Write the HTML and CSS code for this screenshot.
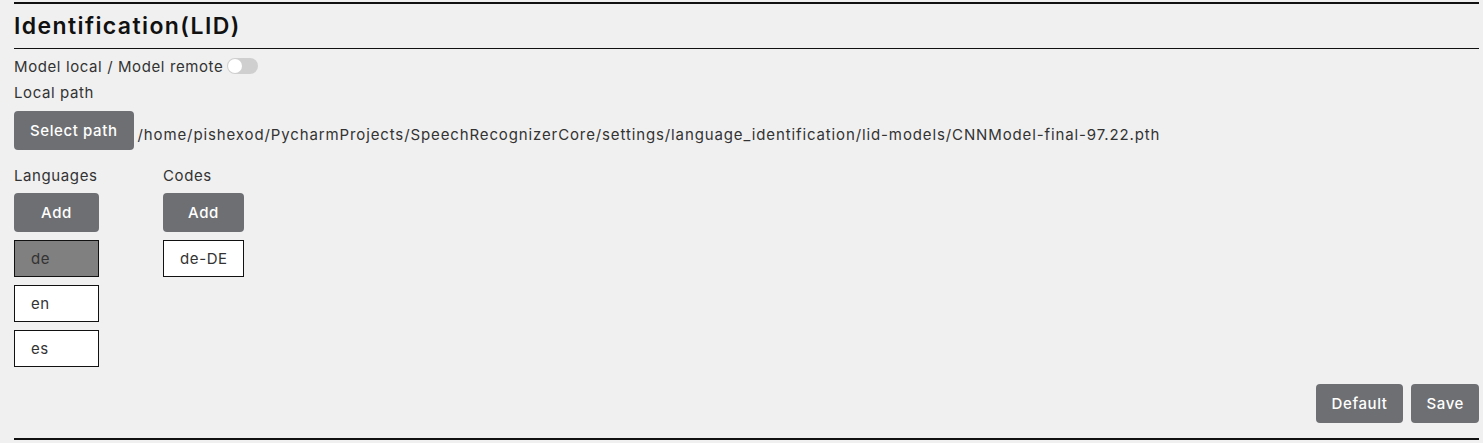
FILE: index.html
```html
<!DOCTYPE html>
<html lang="en">
<head>
    <meta charset="UTF-8">
    <meta name="viewport" content="width=device-width, initial-scale=1.0">
    <title>Identification(LID)</title>
    <link rel="stylesheet" href="styles.css">
</head>
<body>
    <div class="section">
        <h2 class="section-title">Identification(LID)</h2>

        <div class="row switch-row">
            <span>Model local / Model remote</span>
            <span class="switch"><span class="knob"></span></span>
        </div>

        <div class="row label">Local path</div>
        <div class="row path-row">
            <button class="btn btn-wide">Select path</button>
            <span class="path">/home/pishexod/PycharmProjects/SpeechRecognizerCore/settings/language_identification/lid-models/CNNModel-final-97.22.pth</span>
        </div>

        <div class="lists">
            <div class="list">
                <div class="label">Languages</div>
                <button class="btn btn-add">Add</button>
                <div class="item selected">de</div>
                <div class="item">en</div>
                <div class="item">es</div>
            </div>
            <div class="list">
                <div class="label">Codes</div>
                <button class="btn btn-add">Add</button>
                <div class="item">de-DE</div>
            </div>
        </div>

        <div class="actions">
            <button class="btn btn-wide">Default</button>
            <button class="btn">Save</button>
        </div>
    </div>
</body>
</html>
```

FILE: styles.css
```css
body {
    font-family: Inter, "Noto Sans", sans-serif;
    color: #333;
    margin: 0;
    padding: 2px 4px 0 14px;
    background-color: #f0f0f0;
    font-size: 15px;
    letter-spacing: 0.6px;
}

.section {
    border-top: 2px solid #111;
    border-bottom: 2px solid #111;
}

.section-title {
    margin: 0;
    padding: 8px 0 8px;
    font-size: 23px;
    font-weight: 600;
    line-height: 28px;
    letter-spacing: 1.4px;
    border-bottom: 1px solid #111;
    color: #111;
}

.row {
    display: flex;
    align-items: center;
}

.switch-row {
    margin-top: 8px;
    height: 18px;
    gap: 4px;
}

.switch {
    width: 30px;
    height: 16px;
    border-radius: 8px;
    background: #cfcfcf;
    display: flex;
    align-items: center;
    padding-left: 1px;
}

.knob {
    width: 14px;
    height: 14px;
    border-radius: 50%;
    background: #fff;
}

.label {
    height: 18px;
    line-height: 18px;
}

.row.label {
    margin-top: 9px;
}

.path-row {
    margin-top: 9px;
    gap: 4px;
}

.btn {
    font-family: inherit;
    font-size: 15px;
    font-weight: 500;
    letter-spacing: 0.6px;
    color: #fff;
    background: #6e6f73;
    border: none;
    border-radius: 4px;
    height: 39px;
    padding: 0 15px;
    cursor: pointer;
}

.btn-wide {
    padding: 0 16px;
}

.path {
    margin-top: 7px;
    letter-spacing: 0.88px;
}

.lists {
    display: flex;
    gap: 64px;
    margin-top: 17px;
}

.list {
    display: flex;
    flex-direction: column;
    gap: 8px;
    width: 81px;
}

.btn-add {
    width: 100%;
}

.list:first-child {
    width: 85px;
}

.item {
    height: 35px;
    line-height: 35px;
    border: 1px solid #111;
    background: #fff;
    padding-left: 16px;
}

.item.selected {
    background: #808080;
}

.actions {
    display: flex;
    justify-content: flex-end;
    gap: 8px;
    margin-top: 17px;
    padding-bottom: 15px;
}
```
